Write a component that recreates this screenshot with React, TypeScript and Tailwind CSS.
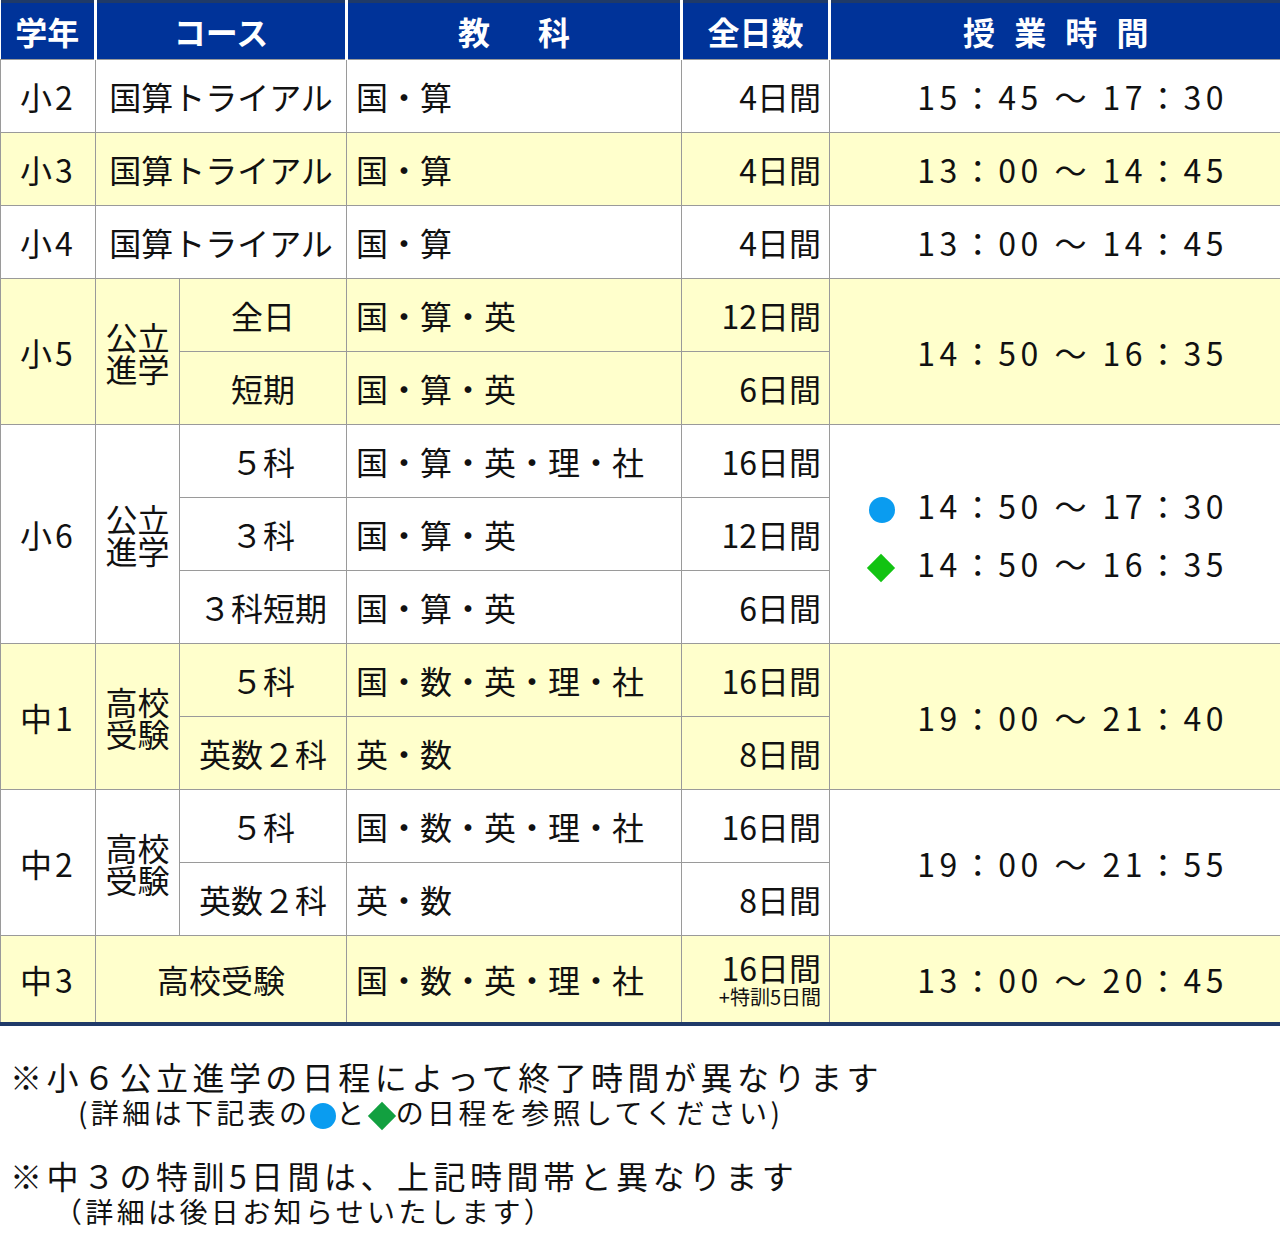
import React from "react";

const Y = "bg-[#ffffcc]";
const td = "border border-[#9a9a9a] p-0 text-[32px] leading-none";
const tm = "tracking-[0.14em]";
const Dot = () => <span className="inline-block w-[26px] h-[26px] rounded-full bg-[#0a9cf0] align-middle mr-[22px]" />;
const Dia = () => <span className="inline-block w-[20px] h-[20px] rotate-45 bg-[#12c312] align-middle mr-[26px] ml-[3px]" />;

export default function App() {
  const font = { fontFamily: '"Noto Sans CJK JP", "Noto Sans", sans-serif' };
  return (
    <div className="w-[1280px] h-[1257px] bg-white text-[#111]" style={font}>
      <table className="w-[1280px] border-collapse table-fixed border-b-[4px] border-b-[#1f3a68]">
        <colgroup>
          <col className="w-[95px]" /><col className="w-[84px]" /><col className="w-[167px]" />
          <col className="w-[335px]" /><col className="w-[148px]" /><col className="w-[451px]" />
        </colgroup>
        <thead>
          <tr className="h-[58px] bg-[#003399] text-white font-bold text-[32px] border-t-[3px] border-t-[#1f3a68]">
            <th className="border-r-[3px] border-r-white">学年</th>
            <th colSpan={2} className="border-r-[3px] border-r-white">コース</th>
            <th className="border-r-[3px] border-r-white tracking-[1.5em] pl-[1.5em]">教科</th>
            <th className="border-r-[3px] border-r-white">全日数</th>
            <th className="tracking-[0.6em] pl-[0.6em]">授業時間</th>
          </tr>
        </thead>
        <tbody>
          {[["小2","15：45 ～ 17：30",""],["小3","13：00 ～ 14：45",Y],["小4","13：00 ～ 14：45",""]].map(([g,t,bg])=>(
            <tr key={g} className={`h-[73px] ${bg}`}>
              <td className={`${td} text-center tracking-[0.1em]`}>{g}</td>
              <td colSpan={2} className={`${td} text-center`}>国算トライアル</td>
              <td className={`${td} pl-[9px]`}>国・算</td>
              <td className={`${td} text-right pr-[8px]`}>4日間</td>
              <td className={`${td} text-right pr-[52px] ${tm}`}>{t}</td>
            </tr>
          ))}
          <tr className={`h-[73px] ${Y}`}>
            <td rowSpan={2} className={`${td} text-center tracking-[0.1em]`}>小5</td>
            <td rowSpan={2} className={`${td} text-center leading-[1.2]`}>公立<br/>進学</td>
            <td className={`${td} text-center`}>全日</td>
            <td className={`${td} pl-[9px]`}>国・算・英</td>
            <td className={`${td} text-right pr-[8px]`}>12日間</td>
            <td rowSpan={2} className={`${td} text-right pr-[52px] ${tm}`}>14：50 ～ 16：35</td>
          </tr>
          <tr className={`h-[73px] ${Y}`}>
            <td className={`${td} text-center`}>短期</td>
            <td className={`${td} pl-[9px]`}>国・算・英</td>
            <td className={`${td} text-right pr-[8px]`}>6日間</td>
          </tr>
          <tr className="h-[73px]">
            <td rowSpan={3} className={`${td} text-center tracking-[0.1em]`}>小6</td>
            <td rowSpan={3} className={`${td} text-center leading-[1.2]`}>公立<br/>進学</td>
            <td className={`${td} text-center`}>５科</td>
            <td className={`${td} pl-[9px]`}>国・算・英・理・社</td>
            <td className={`${td} text-right pr-[8px]`}>16日間</td>
            <td rowSpan={3} className={`${td} text-right pr-[52px] ${tm}`}>
              <div className="mb-[24px]"><Dot />14：50 ～ 17：30</div>
              <div><Dia />14：50 ～ 16：35</div>
            </td>
          </tr>
          <tr className="h-[73px]">
            <td className={`${td} text-center`}>３科</td>
            <td className={`${td} pl-[9px]`}>国・算・英</td>
            <td className={`${td} text-right pr-[8px]`}>12日間</td>
          </tr>
          <tr className="h-[73px]">
            <td className={`${td} text-center`}>３科短期</td>
            <td className={`${td} pl-[9px]`}>国・算・英</td>
            <td className={`${td} text-right pr-[8px]`}>6日間</td>
          </tr>
          {[["中1","19：00 ～ 21：40",Y],["中2","19：00 ～ 21：55",""]].map(([g,t,bg])=>(
            <React.Fragment key={g}>
              <tr className={`h-[73px] ${bg}`}>
                <td rowSpan={2} className={`${td} text-center tracking-[0.1em]`}>{g}</td>
                <td rowSpan={2} className={`${td} text-center leading-[1.2]`}>高校<br/>受験</td>
                <td className={`${td} text-center`}>５科</td>
                <td className={`${td} pl-[9px]`}>国・数・英・理・社</td>
                <td className={`${td} text-right pr-[8px]`}>16日間</td>
                <td rowSpan={2} className={`${td} text-right pr-[52px] ${tm}`}>{t}</td>
              </tr>
              <tr className={`h-[73px] ${bg}`}>
                <td className={`${td} text-center`}>英数２科</td>
                <td className={`${td} pl-[9px]`}>英・数</td>
                <td className={`${td} text-right pr-[8px]`}>8日間</td>
              </tr>
            </React.Fragment>
          ))}
          <tr className={`h-[88px] ${Y}`}>
            <td className={`${td} text-center tracking-[0.1em]`}>中3</td>
            <td colSpan={2} className={`${td} text-center`}>高校受験</td>
            <td className={`${td} pl-[9px]`}>国・数・英・理・社</td>
            <td className={`${td} text-right pr-[8px]`}>
              <div>16日間</div>
              <div className="text-[20px] mt-[4px]">+特訓5日間</div>
            </td>
            <td className={`${td} text-right pr-[52px] ${tm}`}>13：00 ～ 20：45</td>
          </tr>
        </tbody>
      </table>
      <div className="pl-[10px] pt-[34px] text-[32px] leading-none tracking-[0.14em]">
        <div>※小６公立進学の日程によって終了時間が異なります</div>
        <div className="text-[28px] pl-[68px] mt-[6px] tracking-[0.12em]">(詳細は下記表の<span className="inline-block w-[26px] h-[26px] rounded-full bg-[#0a9cf0] align-middle" />と<span className="inline-block w-[20px] h-[20px] rotate-45 bg-[#12a040] align-middle mx-[4px]" />の日程を参照してください)</div>
        <div className="mt-[30px]">※中３の特訓5日間は、上記時間帯と異なります</div>
        <div className="text-[28px] pl-[44px] mt-[6px] tracking-[0.12em]">（詳細は後日お知らせいたします）</div>
      </div>
    </div>
  );
}
